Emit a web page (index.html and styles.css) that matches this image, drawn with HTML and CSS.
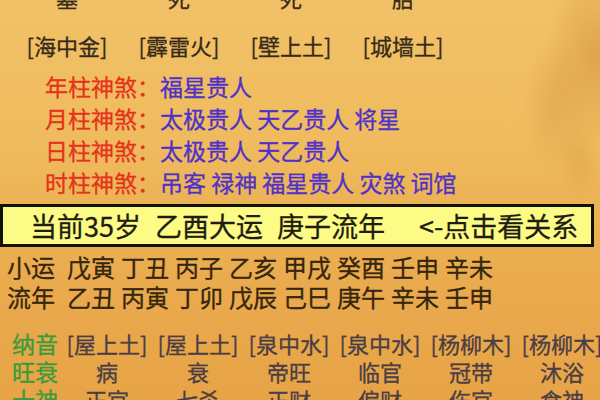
FILE: index.html
```html
<!DOCTYPE html>
<html lang="zh-CN">
<head>
<meta charset="utf-8">
<title>八字排盘</title>
<link rel="stylesheet" href="styles.css">
</head>
<body>
<div class="page">
  <div class="grid4 row-cut">
    <span>墓</span><span>死</span><span>死</span><span>胎</span>
  </div>
  <div class="grid4 row-nayin">
    <span>[海中金]</span><span>[霹雷火]</span><span>[壁上土]</span><span>[城墙土]</span>
  </div>
  <div class="shensha">
    <div class="ss-row"><span class="ss-label">年柱神煞：</span><span class="ss-val">福星贵人</span></div>
    <div class="ss-row"><span class="ss-label">月柱神煞：</span><span class="ss-val">太极贵人 天乙贵人 将星</span></div>
    <div class="ss-row"><span class="ss-label">日柱神煞：</span><span class="ss-val">太极贵人 天乙贵人</span></div>
    <div class="ss-row"><span class="ss-label">时柱神煞：</span><span class="ss-val">吊客 禄神 福星贵人 灾煞 词馆</span></div>
  </div>
  <div class="bar">
    <span class="bar-seg">当前35岁</span><span class="bar-seg">乙酉大运</span><span class="bar-seg">庚子流年</span><span class="bar-seg bar-link">&lt;-点击看关系</span>
  </div>
  <div class="yun">
    <div class="yun-row"><span class="yun-label">小运</span><span>戊寅</span><span>丁丑</span><span>丙子</span><span>乙亥</span><span>甲戌</span><span>癸酉</span><span>壬申</span><span>辛未</span></div>
    <div class="yun-row"><span class="yun-label">流年</span><span>乙丑</span><span>丙寅</span><span>丁卯</span><span>戊辰</span><span>己巳</span><span>庚午</span><span>辛未</span><span>壬申</span></div>
  </div>
  <div class="table">
    <span class="t-label">纳音</span><span>[屋上土]</span><span>[屋上土]</span><span>[泉中水]</span><span>[泉中水]</span><span>[杨柳木]</span><span>[杨柳木]</span>
    <span class="t-label">旺衰</span><span>病</span><span>衰</span><span>帝旺</span><span>临官</span><span>冠带</span><span>沐浴</span>
    <span class="t-label">十神</span><span>正官</span><span>七杀</span><span>正财</span><span>偏财</span><span>伤官</span><span>食神</span>
  </div>
</div>
</body>
</html>
```

FILE: styles.css
```css
html, body {
  margin: 0;
  padding: 0;
}
body {
  width: 600px;
  height: 400px;
  overflow: hidden;
  font-family: "Noto Sans CJK SC", "Noto Sans", sans-serif;
  -webkit-text-stroke: 0.3px currentColor;
  background:
    radial-gradient(ellipse 70px 130px at 595px 55px, rgba(185,115,35,0.35), rgba(185,115,35,0) 70%),
    radial-gradient(ellipse 45px 100px at 555px 105px, rgba(195,125,45,0.25), rgba(195,125,45,0) 70%),
    radial-gradient(ellipse 30px 60px at 580px 160px, rgba(195,125,45,0.2), rgba(195,125,45,0) 70%),
    linear-gradient(180deg, #f2c167 0%, #efbb5e 35%, #ebb154 55%, #e9a94c 75%, #e7a446 100%);
}
.page {
  width: 600px;
}
.grid4 {
  display: grid;
  grid-template-columns: repeat(4, 112px);
  padding-left: 11px;
  text-align: center;
  font-size: 22px;
  line-height: 30px;
  color: #362a1a;
  white-space: nowrap;
}
.row-cut {
  margin-top: -18px;
}
.row-nayin {
  margin-top: 18px;
}
.shensha {
  margin-top: 10px;
  padding-left: 45px;
  font-size: 23px;
  line-height: 32px;
  white-space: nowrap;
}
.ss-label {
  color: #e4321c;
}
.ss-val {
  color: #4f31c8;
}
.bar {
  margin-top: 6px;
  width: 594px;
  box-sizing: border-box;
  height: 43px;
  border: 3px solid #141208;
  background: #fcfb86;
  display: flex;
  align-items: center;
  padding-left: 27px;
  font-size: 27px;
  color: #1f1c10;
  white-space: nowrap;
}
.bar-seg {
  margin-right: 14px;
}
.bar-link {
  margin-left: 20px;
}
.yun {
  margin-top: 5px;
  padding-left: 7px;
  font-size: 24px;
  line-height: 30px;
  color: #36260e;
}
.yun-row {
  display: flex;
  gap: 6px;
  white-space: nowrap;
}
.yun-label {
  margin-right: 6px;
}
.table {
  margin-top: 17px;
  display: grid;
  grid-template-columns: 49.5px repeat(6, 91px);
  padding-left: 12px;
  line-height: 28px;
  font-size: 22px;
  color: #4a3d46;
  white-space: nowrap;
}
.table span {
  text-align: center;
}
.table .t-label {
  text-align: left;
  font-size: 23px;
  color: #3a9a3c;
}
```
